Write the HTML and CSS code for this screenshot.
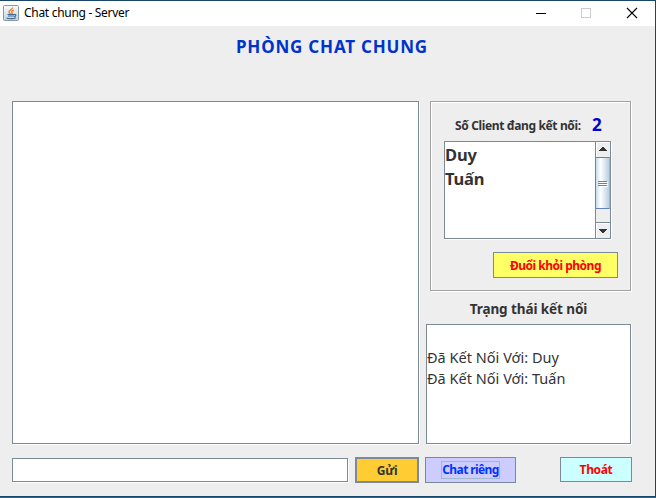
FILE: index.html
```html
<!DOCTYPE html>
<html lang="vi">
<head>
<meta charset="utf-8">
<title>Chat chung - Server</title>
<link rel="stylesheet" href="styles.css">
</head>
<body>
<div class="window">
  <header class="titlebar">
    <svg class="app-icon" width="16" height="16" viewBox="0 0 16 16">
      <defs><linearGradient id="tile" x1="0" y1="0" x2="0" y2="1"><stop offset="0" stop-color="#f8fafb"/><stop offset="1" stop-color="#c5d2dc"/></linearGradient></defs>
      <rect x=".5" y=".5" width="15" height="15" rx="1" fill="url(#tile)" stroke="#8399a9"/>
      <path d="M9.500 2.500C10 4.500 5.500 5 6 7c.2 1 1 1.200 1.300 2M11 5C9.500 5.500 8 6.500 9 7.500c.6.7.1 1.200-.5 1.500" fill="none" stroke="#ec7428" stroke-width="1.300"/>
      <path d="M4.500 9.500h7M5 11h6M11.500 9.500c2-.3 1.800 1.700-.5 2M3.500 13c2 1 7.500 1 9.500-.3" fill="none" stroke="#41688c" stroke-width="1.200"/>
    </svg>
    <span class="caption">Chat chung - Server</span>
    <svg class="controls" width="110" height="25" viewBox="0 0 110 25" fill="none">
      <path d="M0 12.500h10" stroke="#000"/>
      <rect x="45.500" y="7.500" width="9" height="9" stroke="#ccc"/>
      <path d="M91 7l10 10M101 7l-10 10" stroke="#000" stroke-width="1.100"/>
    </svg>
  </header>
  <h1 class="heading"><span>PHÒNG CHAT CHUNG</span></h1>
  <main class="content">
    <div class="field messages"></div>
    <div class="side">
      <section class="clients">
        <div class="count"><span class="count-label">Số Client đang kết nối:</span><span class="count-value">2</span></div>
        <div class="field list">
          <ul class="names"><li>Duy</li><li>Tuấn</li></ul>
          <div class="scrollbar">
            <div class="arrow"><svg width="14" height="15" viewBox="0 0 14 15"><path d="M6 5h2v1h1v1h1v1h1v1H3V8h1V7h1V6h1z" fill="#333"/></svg></div>
            <div class="thumb"><i></i><i></i><i></i></div>
            <div class="track"></div>
            <div class="arrow down"><svg width="14" height="15" viewBox="0 0 14 15"><path d="M3 6h8v1h-1v1H9v1H8v1H6V9H5V8H4V7H3z" fill="#333"/></svg></div>
          </div>
        </div>
        <button class="btn kick"><span>Đuổi khỏi phòng</span></button>
      </section>
      <h2 class="status-title"><span>Trạng thái kết nối</span></h2>
      <div class="field status"><p><span>Đã Kết Nối Với: Duy</span></p><p><span>Đã Kết Nối Với: Tuấn</span></p></div>
    </div>
  </main>
  <footer class="actions">
    <input class="field entry" type="text">
    <button class="btn send"><span>Gửi</span></button>
    <button class="btn private"><span>Chat riêng</span></button>
    <button class="btn exit"><span>Thoát</span></button>
  </footer>
</div>
</body>
</html>
```

FILE: styles.css
```css
* { box-sizing: border-box; margin: 0; padding: 0; }
body {
  width: 656px; height: 498px; overflow: hidden;
  background: #0b70ad;
  font-family: "Noto Sans", "Open Sans", sans-serif;
  color: #333;
}
.window {
  width: 656px; height: 497px;
  display: flex; flex-direction: column;
  background: #eee;
  border: solid #1b466b; border-width: 1px 1px 1px 0;
}
.titlebar { height: 25px; flex: none; background: #fff; display: flex; padding-left: 3px; }
.app-icon { margin-top: 4px; }
.caption { margin-left: 5px; font-size: 12px; line-height: 23px; color: #000; white-space: nowrap; letter-spacing: -.3px; }
.controls { margin: 0 9px 0 auto; }
.heading {
  height: 75px; flex: none; padding-left: 236px;
  font-size: 17px; line-height: 41px; color: #0033cc; white-space: nowrap; letter-spacing: .8px;
}
.content { display: flex; height: 343px; flex: none; padding-left: 12px; }
.field { background: #fff; border: 1px solid #7a8a99; box-shadow: 1px 1px 0 #fff; border-radius: 0; }
.messages { width: 407px; }
.side { margin-left: 7px; width: 205px; display: flex; flex-direction: column; }
.clients {
  margin-left: 4px; width: 201px; height: 190px; flex: none;
  padding: 12px 12px 0 13px;
  border: 1px solid #a2a2a2; box-shadow: 1px 1px 0 #fff, inset 1px 1px 0 #fff;
  display: flex; flex-direction: column;
}
.count { display: flex; height: 27px; line-height: 24px; padding-left: 11px; font-weight: 700; white-space: nowrap; }
.count-label { width: 137px; font-size: 12px; letter-spacing: -.36px; }
.count-value { font-size: 17px; line-height: 21px; color: #0000cc; }
.list { width: 167px; height: 98px; display: flex; flex: none; }
.names { list-style: none; flex: 1; padding-top: 1px; font-size: 16.5px; font-weight: 700; line-height: 24px; letter-spacing: -.15px; }
.scrollbar { width: 15px; border-left: 1px solid #7a8a99; display: flex; flex-direction: column; background: #eee; }
.arrow { height: 15px; box-shadow: inset 1px 1px 0 #fff; }
.arrow svg { display: block; }
.thumb {
  height: 52px; margin-left: -1px; border: 1px solid #6382bf;
  border-right-color: #9db8d8;
  background: linear-gradient(90deg, #c7dcef, #fff 35%, #b8cfe5);
  display: flex; flex-direction: column; align-items: center; justify-content: center; gap: 1px;
}
.thumb i { width: 9px; height: 1px; background: #6382bf; box-shadow: 1px 1px 0 #fff; }
.track { height: 13px; }
.arrow.down { height: 16px; border-top: 1px solid #7a8a99; }
.btn {
  display: flex; align-items: center; justify-content: center; flex: none;
  border: 1px solid #7a8a99; font: 700 12px "Noto Sans", "Open Sans", sans-serif; white-space: nowrap; letter-spacing: -.35px;
}
.kick { width: 125px; height: 26px; margin: 13px 0 0 auto; background: #ffff66; color: #f00; letter-spacing: -.5px; }
.status-title { height: 33px; flex: none; line-height: 36px; font-size: 13.5px; text-align: center; letter-spacing: -.08px; white-space: nowrap; }
.status { height: 120px; padding-top: 22px; font-size: 14.5px; line-height: 21px; white-space: nowrap; letter-spacing: .02px; }
.actions { display: flex; padding: 13px 0 0 12px; align-items: flex-start; }
.entry { width: 336px; height: 24px; margin-top: 1px; outline: 0; }
.send { width: 64px; height: 26px; margin-left: 7px; background: #ffcc33; border-width: 2px; color: #333; }
.private { width: 91px; height: 26px; margin-left: 6px; background: #ccccff; color: #0033ff; letter-spacing: -.6px; }
.private span { border: 1px solid #a3b8cc; line-height: 16px; }
.exit { width: 72px; height: 25px; margin-left: 44px; background: #ccffff; color: #f00; }
```
